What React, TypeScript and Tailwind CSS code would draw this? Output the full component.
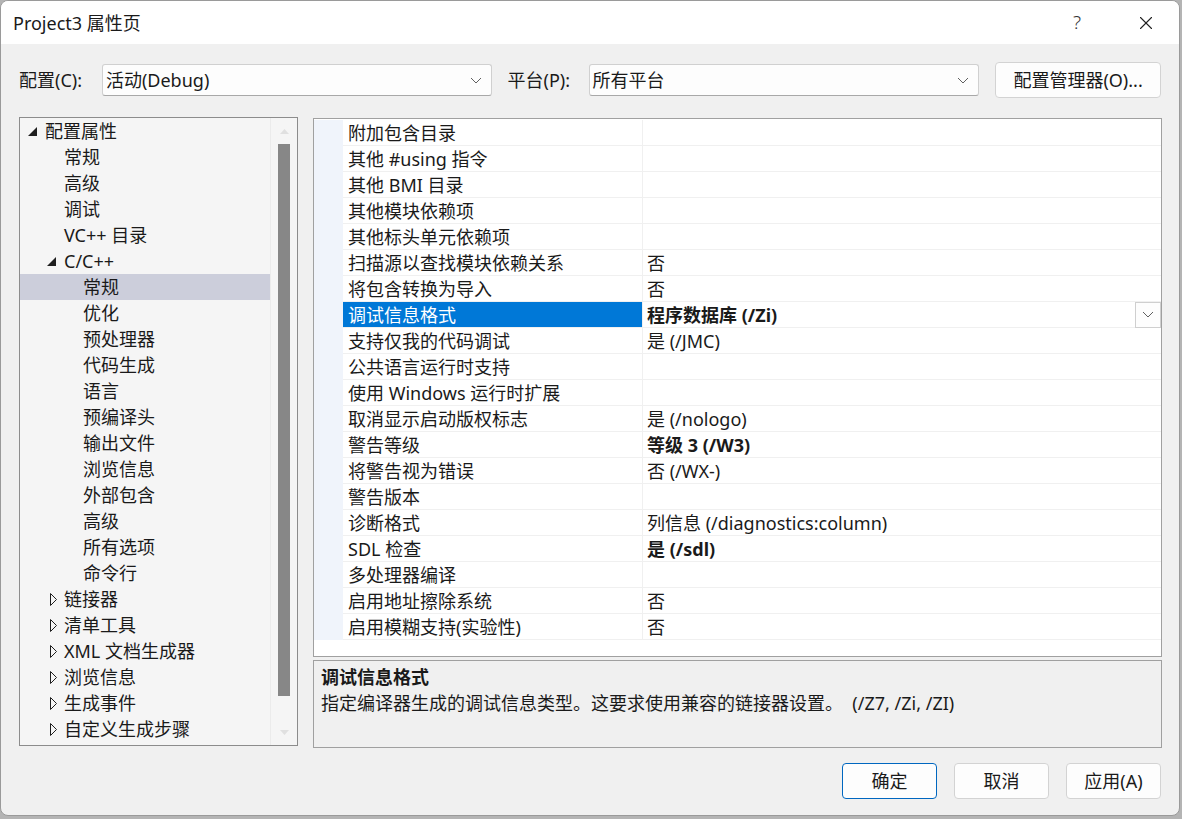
import { X } from 'lucide-react';

type TreeItem = { level: number; text: string; toggle?: 'open' | 'closed'; selected?: boolean };

const tree: TreeItem[] = [
  { level: 0, text: '配置属性', toggle: 'open' },
  { level: 1, text: '常规' },
  { level: 1, text: '高级' },
  { level: 1, text: '调试' },
  { level: 1, text: 'VC++ 目录' },
  { level: 1, text: 'C/C++', toggle: 'open' },
  { level: 2, text: '常规', selected: true },
  { level: 2, text: '优化' },
  { level: 2, text: '预处理器' },
  { level: 2, text: '代码生成' },
  { level: 2, text: '语言' },
  { level: 2, text: '预编译头' },
  { level: 2, text: '输出文件' },
  { level: 2, text: '浏览信息' },
  { level: 2, text: '外部包含' },
  { level: 2, text: '高级' },
  { level: 2, text: '所有选项' },
  { level: 2, text: '命令行' },
  { level: 1, text: '链接器', toggle: 'closed' },
  { level: 1, text: '清单工具', toggle: 'closed' },
  { level: 1, text: 'XML 文档生成器', toggle: 'closed' },
  { level: 1, text: '浏览信息', toggle: 'closed' },
  { level: 1, text: '生成事件', toggle: 'closed' },
  { level: 1, text: '自定义生成步骤', toggle: 'closed' },
];

type Prop = { name: string; value?: string; bold?: boolean; selected?: boolean };

const props: Prop[] = [
  { name: '附加包含目录' },
  { name: '其他 #using 指令' },
  { name: '其他 BMI 目录' },
  { name: '其他模块依赖项' },
  { name: '其他标头单元依赖项' },
  { name: '扫描源以查找模块依赖关系', value: '否' },
  { name: '将包含转换为导入', value: '否' },
  { name: '调试信息格式', value: '程序数据库 (/Zi)', bold: true, selected: true },
  { name: '支持仅我的代码调试', value: '是 (/JMC)' },
  { name: '公共语言运行时支持' },
  { name: '使用 Windows 运行时扩展' },
  { name: '取消显示启动版权标志', value: '是 (/nologo)' },
  { name: '警告等级', value: '等级 3 (/W3)', bold: true },
  { name: '将警告视为错误', value: '否 (/WX-)' },
  { name: '警告版本' },
  { name: '诊断格式', value: '列信息 (/diagnostics:column)' },
  { name: 'SDL 检查', value: '是 (/sdl)', bold: true },
  { name: '多处理器编译' },
  { name: '启用地址擦除系统', value: '否' },
  { name: '启用模糊支持(实验性)', value: '否' },
];

function Chevron() {
  return (
    <svg width="12" height="7" viewBox="0 0 12 7" fill="none" stroke="#606060" strokeWidth="1">
      <path d="M1 1 L6 6 L11 1" />
    </svg>
  );
}

function Combo({ value, width }: { value: string; width: string }) {
  return (
    <div
      className={`${width} h-[32px] flex items-center justify-between pl-[3px] pr-[9px] bg-[#fdfdfd] border border-[#d0d0d0] border-b-[#a8a8a8] rounded-[3px]`}
    >
      <span>{value}</span>
      <Chevron />
    </div>
  );
}

function Button({ label, primary }: { label: string; primary?: boolean }) {
  return (
    <button
      className={`w-[95px] h-[36px] rounded-[4px] bg-[#fdfdfd] flex items-center justify-center ${
        primary ? 'border border-[#0067c0]' : 'border border-[#d3d3d3]'
      }`}
    >
      {label}
    </button>
  );
}

function Toggle({ kind }: { kind: 'open' | 'closed' }) {
  if (kind === 'open') {
    return (
      <svg width="9" height="9" viewBox="0 0 9 9">
        <path d="M9 0 L9 9 L0 9 Z" fill="#1e1e1e" />
      </svg>
    );
  }
  return (
    <svg width="7" height="13" viewBox="0 0 7 13">
      <path d="M0.5 0.5 L6.5 6.5 L0.5 12.5 Z" fill="none" stroke="#1e1e1e" strokeWidth="1" />
    </svg>
  );
}

export default function App() {
  return (
    <div
      className="w-[1182px] h-[819px] bg-[#b4b4b4] text-[18px] text-[#1a1a1a] leading-none"
      style={{ fontFamily: '"Noto Sans", "Noto Sans CJK SC", sans-serif' }}
    >
      <div className="w-[1180px] h-[816px] rounded-[8px] border border-[#9a9a9a] overflow-hidden flex flex-col bg-[#f0f0f0]">
        {/* Title bar */}
        <div className="h-[43px] bg-white flex items-center pl-[12px]">
          <span className="flex-1 text-[18px]">Project3 属性页</span>
          <span className="w-[40px] text-center text-[19px] text-[#333] font-light mr-[38px]">?</span>
          <X size={22} strokeWidth={1.2} className="text-[#222] mr-[22px]" />
        </div>

        {/* Config row */}
        <div className="flex items-center pl-[18px] pr-[18px] mt-[18px] h-[36px]">
          <span className="w-[83px]">配置(C):</span>
          <Combo value="活动(Debug)" width="w-[390px]" />
          <span className="w-[81px] ml-[16px]">平台(P):</span>
          <Combo value="所有平台" width="w-[391px]" />
          <button className="ml-[16px] w-[166px] h-[36px] rounded-[4px] bg-[#fdfdfd] border border-[#d3d3d3] flex items-center justify-center">
            配置管理器(O)...
          </button>
        </div>

        {/* Main */}
        <div className="flex pl-[18px] mt-[19px] gap-[15px]">
          {/* Tree */}
          <div className="w-[279px] h-[629px] border border-[#8c8c8c] bg-[#f5f5f5] flex">
            <div className="flex-1">
              {tree.map((t, i) => (
                <div
                  key={i}
                  className={`h-[26px] flex items-center relative ${t.selected ? 'bg-[#cccedb]' : ''}`}
                  style={{ paddingLeft: 25 + t.level * 19 }}
                >
                  {t.toggle && (
                    <span
                      className="absolute flex items-center justify-center w-[10px] h-[26px] top-0"
                      style={{ left: t.toggle === 'open' ? 7 + t.level * 19 : 9 + t.level * 19 }}
                    >
                      <Toggle kind={t.toggle} />
                    </span>
                  )}
                  <span>{t.text}</span>
                </div>
              ))}
            </div>
            {/* Scrollbar */}
            <div className="w-[27px] border-l border-[#ebebeb] flex flex-col items-center">
              <div className="h-[26px] flex items-center justify-center">
                <svg width="9" height="5" viewBox="0 0 9 5">
                  <path d="M0 5 L4.5 0 L9 5 Z" fill="#e0e0e0" />
                </svg>
              </div>
              <div className="w-[12px] h-[552px] bg-[#878787]" />
              <div className="flex-1" />
              <div className="h-[26px] flex items-center justify-center">
                <svg width="9" height="5" viewBox="0 0 9 5">
                  <path d="M0 0 L4.5 5 L9 0 Z" fill="#e0e0e0" />
                </svg>
              </div>
            </div>
          </div>

          {/* Right column */}
          <div className="w-[849px] mt-[1px] flex flex-col gap-[3px]">
            <div className="h-[539px] border border-[#a0a0a0] bg-white pt-[1px]">
              {props.map((p, i) => (
                <div key={i} className="h-[26px] flex">
                  <div className="w-[29px] bg-[#f0f4fb]" />
                  <div
                    className={`w-[299px] flex items-center pl-[5px] border-b border-[#f0f0f0] ${
                      p.selected ? 'bg-[#0078d7] text-white border-[#0078d7]' : ''
                    }`}
                  >
                    {p.name}
                  </div>
                  <div className="flex-1 flex items-center pl-[4px] border-l border-b border-[#f0f0f0]">
                    <span className={`flex-1 ${p.bold ? 'font-bold' : ''}`}>{p.value ?? ''}</span>
                    {p.selected && (
                      <div className="w-[26px] h-[26px] border border-[#cfcfcf] bg-[#fdfdfd] flex items-center justify-center">
                        <Chevron />
                      </div>
                    )}
                  </div>
                </div>
              ))}
            </div>
            <div className="h-[88px] border border-[#a0a0a0] bg-[#f0f0f0] px-[7px] pt-[3px]">
              <div className="h-[26px] flex items-center font-bold">调试信息格式</div>
              <div className="h-[26px] flex items-center">
                指定编译器生成的调试信息类型。这要求使用兼容的链接器设置。&nbsp;&nbsp;(/Z7, /Zi, /ZI)
              </div>
            </div>
          </div>
        </div>

        {/* Buttons */}
        <div className="flex justify-end gap-[17px] pr-[18px] mt-[15px]">
          <Button label="确定" primary />
          <Button label="取消" />
          <Button label="应用(A)" />
        </div>
      </div>
    </div>
  );
}
